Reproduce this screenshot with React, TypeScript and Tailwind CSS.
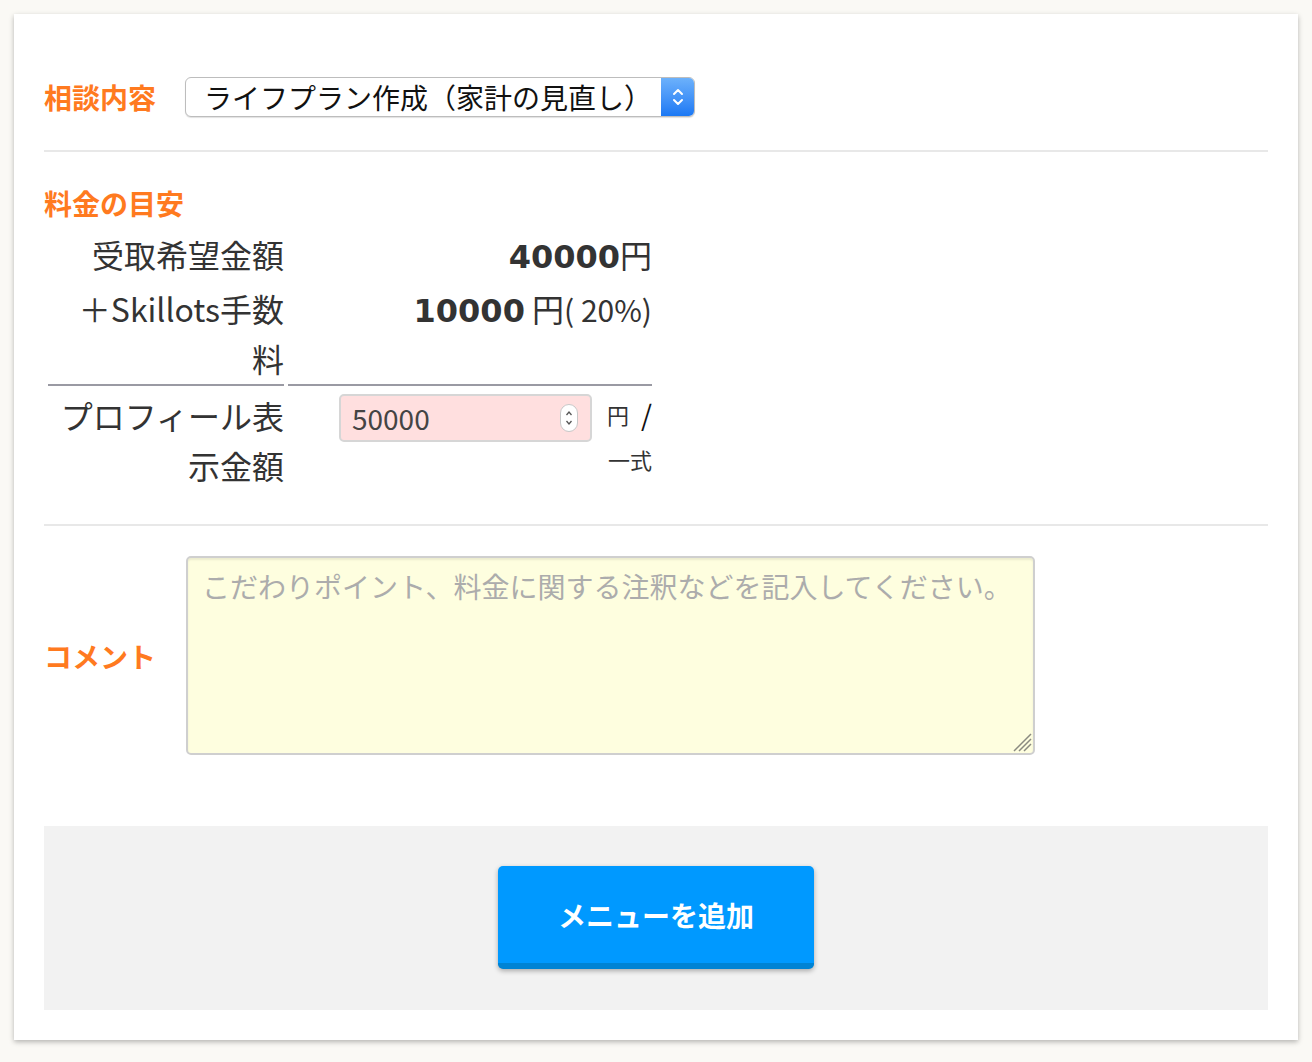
import React from "react";

const font = { fontFamily: '"Noto Sans CJK JP", "Noto Sans", sans-serif' };

function SelectArrow() {
  return (
    <svg width="14" height="22" viewBox="0 0 14 22" fill="none">
      <path d="M3 8 L7 4 L11 8" stroke="white" strokeWidth="2" strokeLinecap="round" strokeLinejoin="round" />
      <path d="M3 14 L7 18 L11 14" stroke="white" strokeWidth="2" strokeLinecap="round" strokeLinejoin="round" />
    </svg>
  );
}

function Spinner() {
  return (
    <div className="flex h-[28px] w-[18px] flex-col items-center justify-center rounded-[9px] border border-[#c8c8c8] bg-white">
      <svg width="10" height="20" viewBox="0 0 10 20" fill="none">
        <path d="M2.5 7 L5 4 L7.5 7" stroke="#555" strokeWidth="1.3" />
        <path d="M2.5 13 L5 16 L7.5 13" stroke="#555" strokeWidth="1.3" />
      </svg>
    </div>
  );
}

export default function App() {
  return (
    <div className="min-h-[1062px] bg-[#faf9f5] pt-[14px] pb-[22px]" style={font}>
      <div className="mx-[14px] bg-white px-[30px] pt-[63px] pb-[30px] shadow-[0_2px_5px_rgba(0,0,0,0.28)]">
        {/* 相談内容 */}
        <div className="flex h-[40px] items-center">
          <div className="w-[141px] text-[28px] font-bold leading-none text-[#ff7a1f]">相談内容</div>
          <div className="flex h-[40px] w-[510px] items-stretch overflow-hidden rounded-[6px] border border-[#bdbdbd] bg-white shadow-[0_1px_1px_rgba(0,0,0,0.12)]">
            <div className="flex flex-1 items-center pl-[18px] text-[28px] leading-none text-[#111]">
              ライフプラン作成（家計の見直し）
            </div>
            <div className="flex w-[33px] items-center justify-center bg-gradient-to-b from-[#6cb1fb] to-[#1a78f4]">
              <SelectArrow />
            </div>
          </div>
        </div>

        <div className="mt-[33px] h-[2px] bg-[#e8e8e8]" />

        {/* 料金の目安 */}
        <div className="mt-[31px] flex h-[40px] items-center text-[28px] font-bold leading-none text-[#ff7a1f]">
          料金の目安
        </div>

        <table className="mt-[2px] border-separate border-spacing-[4px] text-[32px] leading-[50px] text-[#333]">
          <tbody>
            <tr>
              <td className="w-[236px] p-0 text-right align-top">受取希望金額</td>
              <td className="w-[364px] p-0 text-right align-top">
                <span className="font-['DejaVu_Sans'] font-bold leading-none">40000</span>円
              </td>
            </tr>
            <tr>
              <td className="border-b-2 border-[#9a9aa3] p-0 pb-[1px] text-right align-top">
                ＋Skillots手数
                <br />料
              </td>
              <td className="border-b-2 border-[#9a9aa3] p-0 pb-[1px] text-right align-top">
                <span className="font-['DejaVu_Sans'] font-bold leading-none">10000</span> 円
                <span className="text-[30px] leading-none">( 20%)</span>
              </td>
            </tr>
            <tr>
              <td className="p-0 text-right align-top">
                プロフィール表
                <br />示金額
              </td>
              <td className="p-0 align-top">
                <div className="flex justify-end gap-[12px] pt-[4px]">
                  <div className="flex h-[48px] w-[253px] items-center rounded-[5px] border-2 border-[#d6d6d6] bg-[#ffdfdf] pl-[11px] pr-[12px]">
                    <span className="flex-1 text-[28px] leading-none text-[#444]">50000</span>
                    <Spinner />
                  </div>
                  <div className="flex w-[48px] flex-col items-end text-[22px] text-[#333]">
                    <div className="flex h-[40px] items-center gap-[12px] leading-none">
                      <span>円</span>
                      <span className="text-[28px] text-[#111]">/</span>
                    </div>
                    <div className="mt-[14px] leading-none">一式</div>
                  </div>
                </div>
              </td>
            </tr>
          </tbody>
        </table>

        <div className="mt-[30px] h-[2px] bg-[#e8e8e8]" />

        {/* コメント */}
        <div className="mt-[30px] flex items-center">
          <div className="w-[142px] text-[28px] font-bold leading-none text-[#ff7a1f]">コメント</div>
          <div className="relative">
            <textarea
              className="block h-[199px] w-[849px] resize-none rounded-[5px] border-2 border-[#cfcfcf] bg-[#fefedf] px-[14px] pt-[10px] text-[28px] leading-[36px] text-[#333] shadow-[inset_0_2px_2px_rgba(0,0,0,0.08)] outline-none placeholder:text-[#acacac]"
              style={font}
              placeholder="こだわりポイント、料金に関する注釈などを記入してください。"
            />
            <svg className="absolute bottom-[3px] right-[3px]" width="22" height="22" viewBox="0 0 22 22">
              <path d="M4 21 L21 4 M9 21 L21 9 M14 21 L21 14" stroke="#8a8a80" strokeWidth="1.5" />
            </svg>
          </div>
        </div>

        {/* ボタン領域 */}
        <div className="mt-[71px] flex justify-center bg-[#f2f2f2] pt-[40px] pb-[41px]">
          <button
            className="flex h-[103px] w-[316px] items-center justify-center rounded-[5px] border-b-[6px] border-[#0083d4] bg-[#0099ff] text-[28px] font-bold text-white shadow-[0_2px_5px_rgba(0,0,0,0.3)]"
            style={font}
          >
            メニューを追加
          </button>
        </div>
      </div>
    </div>
  );
}
